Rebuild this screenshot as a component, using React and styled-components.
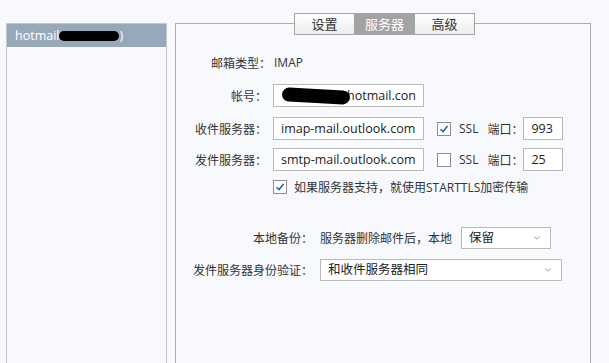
import React from 'react';
import styled, { createGlobalStyle } from 'styled-components';
import { ChevronDown } from 'lucide-react';

const GlobalStyle = createGlobalStyle`
  html, body {
    margin: 0;
    padding: 0;
    background: #f7f9fd;
    overflow: hidden;
  }
  body {
    font-family: "Segoe UI", "Open Sans", "Noto Sans CJK SC", sans-serif;
    font-size: 12px;
    color: #333;
  }
`;

const Page = styled.div`
  display: flex;
  align-items: flex-start;
  padding: 23px 0 0 6px;
  height: 363px;
  box-sizing: border-box;
`;

const AccountList = styled.div`
  width: 159px;
  height: 340px;
  border: 1px solid #c6c8cc;
  border-bottom: none;
  background: #f8f9fd;
`;

const AccountItem = styled.div`
  position: relative;
  height: 23px;
  line-height: 23px;
  padding-left: 8px;
  background: ${p => (p.$active ? '#97a8ba' : 'transparent')};
  color: ${p => (p.$active ? '#fff' : '#333')};
  font-size: 12.5px;
`;

const Blob = styled.span`
  position: absolute;
  left: ${p => p.$left}px;
  top: ${p => p.$top}px;
  width: ${p => p.$w}px;
  height: ${p => p.$h}px;
  background: #000;
  border-radius: ${p => p.$h / 2}px;
  transform: rotate(${p => p.$rot || 0}deg);
`;

const Settings = styled.div`
  margin-left: 8px;
  width: 414px;
  height: 340px;
  border: 1px solid #adadad;
  border-bottom: none;
  background: #f8f9fd;
`;

const Tabs = styled.div`
  display: flex;
  margin: -11px 0 0 118px;
`;

const Tab = styled.div`
  width: 59px;
  height: 20px;
  line-height: 20px;
  text-align: center;
  font-size: 13px;
  border: 1px solid #a5a5a5;
  margin-left: ${p => (p.$first ? 0 : -1)}px;
  background: ${p => (p.$active ? '#a3a3a3' : 'linear-gradient(#ffffff, #ececec)')};
  color: ${p => (p.$active ? '#fff' : '#333')};
`;

const Form = styled.div`
  display: flex;
  flex-direction: column;
  padding: 16px 0 0 9px;
`;

const Row = styled.div`
  display: flex;
  align-items: center;
  height: ${p => p.$h || 23}px;
  margin-top: ${p => p.$mt || 0}px;
`;

const Label = styled.div`
  width: ${p => p.$w}px;
  text-align: right;
  margin-right: ${p => p.$gap || 6}px;
  white-space: nowrap;
`;

const Input = styled.div`
  position: relative;
  overflow: hidden;
  width: ${p => p.$w}px;
  height: 21px;
  line-height: 21px;
  border: 1px solid #b9b9b9;
  background: #fff;
  padding-left: 7px;
  box-sizing: content-box;
  font-size: 12.5px;
  white-space: nowrap;
  color: #222;
`;

const Select = styled(Input)`
  height: 20px;
  line-height: 20px;
  display: flex;
  align-items: center;
  justify-content: space-between;
  padding-right: 8px;
  font-size: 12.5px;
`;

const Box = styled.span`
  width: 12px;
  height: 12px;
  border: 1px solid #8f8f8f;
  background: #fff;
  display: inline-flex;
  align-items: center;
  justify-content: center;
  margin: ${p => p.$m || '0'};
`;

const Text = styled.span`
  margin: ${p => p.$m || '0'};
  white-space: nowrap;
`;

function Check({ checked, m }) {
  return (
    <Box $m={m}>
      {checked && (
        <svg width="10" height="10" viewBox="0 0 10 10">
          <path d="M1.5 5.2 L4 7.6 L8.6 2" fill="none" stroke="#2d5d9f" strokeWidth="1.5" />
        </svg>
      )}
    </Box>
  );
}

export default function App() {
  return (
    <>
      <GlobalStyle />
      <Page>
        <AccountList>
          <AccountItem $active>
            hotmail<span style={{ marginLeft: 60 }}>)</span>
            <Blob $left={52} $top={7} $w={60} $h={10} />
          </AccountItem>
        </AccountList>
        <Settings>
          <Tabs>
            <Tab $first>设置</Tab>
            <Tab $active>服务器</Tab>
            <Tab>高级</Tab>
          </Tabs>
          <Form>
            <Row>
              <Label $w={86} $gap={3}>邮箱类型：</Label>
              <Text>IMAP</Text>
            </Row>
            <Row $mt={10}>
              <Label $w={82}>帐号：</Label>
              <Input $w={142}>
                <Text $m="0 0 0 66px">hotmail.con</Text>
                <Blob $left={8} $top={4} $w={68} $h={14} $rot={3} />
              </Input>
            </Row>
            <Row $mt={10}>
              <Label $w={82}>收件服务器：</Label>
              <Input $w={142}>imap-mail.outlook.com</Input>
              <Check checked m="0 0 0 13px" />
              <Text $m="0 0 0 8px">SSL</Text>
              <Text $m="0 0 0 9px">端口：</Text>
              <Input $w={31}>993</Input>
            </Row>
            <Row $mt={8}>
              <Label $w={82}>发件服务器：</Label>
              <Input $w={142}>smtp-mail.outlook.com</Input>
              <Check m="0 0 0 13px" />
              <Text $m="0 0 0 8px">SSL</Text>
              <Text $m="0 0 0 9px">端口：</Text>
              <Input $w={31}>25</Input>
            </Row>
            <Row $mt={3} $h={26}>
              <Label $w={82} />
              <Check checked />
              <Text $m="0 0 0 7px">如果服务器支持，就使用STARTTLS加密传输</Text>
            </Row>
            <Row $mt={27} $h={22}>
              <Label $w={128} $gap={7}>本地备份：</Label>
              <Text>服务器删除邮件后，本地</Text>
              <Select $w={73} style={{ marginLeft: 9 }}>
                保留
                <ChevronDown size={10} color="#888" />
              </Select>
            </Row>
            <Row $mt={10} $h={22}>
              <Label $w={128} $gap={7}>发件服务器身份验证：</Label>
              <Select $w={225}>
                和收件服务器相同
                <ChevronDown size={10} color="#888" />
              </Select>
            </Row>
          </Form>
        </Settings>
      </Page>
    </>
  );
}
